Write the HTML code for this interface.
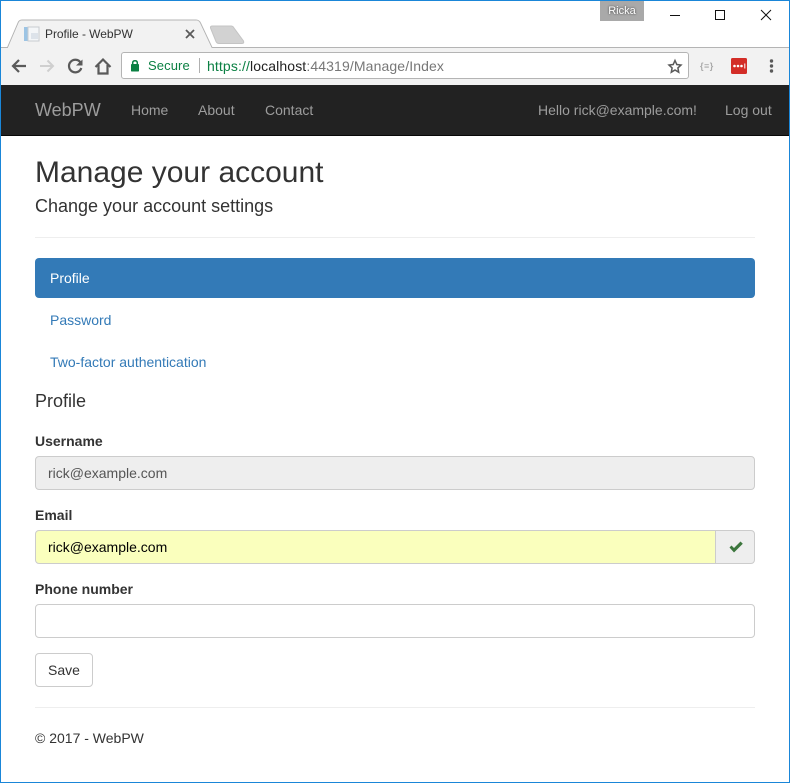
<!DOCTYPE html>
<html><head><meta charset="utf-8"><title>Profile - WebPW</title>
<style>
html,body{margin:0;padding:0;background:#fff}
body{width:790px;height:783px;position:relative;overflow:hidden;font-family:"Liberation Sans",sans-serif;font-size:14px;color:#333}
.a{position:absolute;white-space:nowrap}
.t{line-height:20px}
.n{color:#9d9d9d}
.in{box-sizing:border-box;height:34px;border:1px solid #ccc;border-radius:4px;left:35px;width:720px;padding:0 12px;line-height:32px;color:#555}
.l{font-weight:bold;color:#333}
.lnk{color:#337ab7}
</style></head><body>
<!-- window chrome -->
<div class="a" style="left:0;top:48px;width:790px;height:37px;background:#f2f2f2;"></div>
<svg class="a" style="left:0;top:0" width="790" height="85" viewBox="0 0 790 85">
<path d="M0.5 47.5H7.5L18 23Q19 20 22 20H196Q199 20 200.500 23L212 47.500H789.500" fill="none" stroke="#b4b4b4"/>
<path d="M8 48L18.500 23.500Q19.500 20.500 22 20.500H196Q198.500 20.500 200 23.500L211.500 48Z" fill="#f2f2f2"/>
<path d="M210.500 28Q210 26 212.500 26H231Q233 26 234 28L243.500 41Q244.500 43.500 242 43.500H219Q217 43.500 216 41.500Z" fill="#d2d2d2" stroke="#c4c4c4"/>
<!-- favicon -->
<rect x="24" y="27" width="4" height="14" fill="#9cc4e4"/>
<rect x="28" y="27" width="11" height="14" fill="#f4f6f8" stroke="#c8ccd0" stroke-width="1"/>
<rect x="31" y="33" width="7" height="6" fill="#dde3ea"/>
<!-- tab close -->
<path d="M186 30L194 38M194 30L186 38" stroke="#5a5a5a" stroke-width="1.800" fill="none"/>
<!-- back -->
<path d="M26 66H13.500M19 60L13 66L19 72" stroke="#5a5a5a" stroke-width="2.200" fill="none"/>
<!-- forward -->
<path d="M40 66H53M47.500 60.500L53 66L47.500 71.500" stroke="#cfcfcf" stroke-width="2" fill="none"/>
<!-- reload -->
<path d="M80.500 62.500A6.300 6.300 0 1 0 81.300 68" stroke="#5a5a5a" stroke-width="2.200" fill="none"/>
<path d="M76 65.500H82.500V59.500Z" fill="#5a5a5a"/>
<!-- home -->
<path d="M95.500 67L103 59.500L110.500 67M98.500 65V73.500H107.500V65" stroke="#5a5a5a" stroke-width="2.200" fill="none"/>
<!-- omnibox -->
<rect x="121.500" y="52.500" width="567" height="26" rx="2.500" fill="#fff" stroke="#b4b4b4"/>
<!-- lock -->
<rect x="131" y="64" width="8" height="7.500" rx="0.800" fill="#0b8043"/>
<path d="M132.700 64V62.800Q132.700 60.700 135 60.700Q137.300 60.700 137.300 62.800V64" fill="none" stroke="#0b8043" stroke-width="1.500"/>
<rect x="199" y="58" width="1" height="15" fill="#b0b0b0"/>
<!-- star -->
<path d="M675 60.500L676.800 64.500L681 65L677.900 67.900L678.700 72.200L675 70L671.300 72.200L672.100 67.900L669 65L673.200 64.500Z" fill="none" stroke="#5a5a5a" stroke-width="1.500"/>
<!-- lastpass -->
<rect x="731" y="58" width="16" height="16" rx="1.500" fill="#d32d27"/>
<circle cx="734.500" cy="66" r="1.300" fill="#fff"/><circle cx="738" cy="66" r="1.300" fill="#fff"/><circle cx="741.500" cy="66" r="1.300" fill="#fff"/>
<rect x="744.300" y="63.500" width="1" height="5" fill="#fff"/>
<!-- menu -->
<circle cx="771.500" cy="61" r="1.700" fill="#5a5a5a"/><circle cx="771.500" cy="66" r="1.700" fill="#5a5a5a"/><circle cx="771.500" cy="71" r="1.700" fill="#5a5a5a"/>
<!-- window controls -->
<rect x="670" y="15" width="10" height="1" fill="#111"/>
<rect x="715.500" y="10.500" width="9" height="9" fill="none" stroke="#111"/>
<path d="M761 10L771 20M771 10L761 20" stroke="#111" stroke-width="1" fill="none"/>
</svg>
<div class="a" style="left:600px;top:1px;width:44px;height:20px;background:#a9a9a9;color:#fff;font-size:11px;line-height:20px;text-align:center;text-shadow:0 0 2px #333">Ricka</div>
<div class="a" style="left:45px;top:24px;font-size:12px;line-height:20px;color:#333;letter-spacing:-0.05px">Profile - WebPW</div>
<div class="a" style="left:148px;top:56px;font-size:13px;line-height:20px;color:#0b8043;letter-spacing:0.1px">Secure</div>
<div class="a" style="left:207px;top:56px;font-size:14px;line-height:20px;color:#777;letter-spacing:0.12px"><span style="color:#0b8043">https://</span><span style="color:#222">localhost</span>:44319/Manage/Index</div>
<div class="a" style="left:700px;top:60px;font-size:9px;line-height:12px;color:#aaa;font-weight:bold;letter-spacing:0.5px">{≡}</div>
<!-- navbar -->
<div class="a" style="left:0;top:85px;width:790px;height:51px;box-sizing:border-box;background:#222;border-bottom:1px solid #080808"></div>
<div class="a n" style="left:35px;top:100px;font-size:18px;line-height:20px">WebPW</div>
<div class="a n t" style="left:131px;top:100px">Home</div>
<div class="a n t" style="left:198px;top:100px">About</div>
<div class="a n t" style="left:265px;top:100px">Contact</div>
<div class="a n t" style="left:538px;top:100px">Hello rick@example.com!</div>
<div class="a n t" style="left:725px;top:100px">Log out</div>
<!-- header -->
<div class="a" style="left:35px;top:156px;font-size:30px;line-height:33px;color:#333">Manage your account</div>
<div class="a" style="left:35px;top:196px;font-size:18px;line-height:20px;color:#333">Change your account settings</div>
<div class="a" style="left:35px;top:237px;width:720px;height:1px;background:#eee"></div>
<!-- pills -->
<div class="a" style="left:35px;top:258px;width:720px;height:40px;background:#337ab7;border-radius:4px"></div>
<div class="a t" style="left:50px;top:268px;color:#fff">Profile</div>
<div class="a t lnk" style="left:50px;top:310px">Password</div>
<div class="a t lnk" style="left:50px;top:352px">Two-factor authentication</div>
<div class="a" style="left:35px;top:391px;font-size:18px;line-height:20px;color:#333">Profile</div>
<!-- form -->
<div class="a t l" style="left:35px;top:431px">Username</div>
<div class="a in" style="top:456px;background:#eee">rick@example.com</div>
<div class="a t l" style="left:35px;top:505px">Email</div>
<div class="a in" style="top:530px;width:681px;background:#faffbd;color:#000;border-radius:4px 0 0 4px">rick@example.com</div>
<div class="a" style="left:715px;top:530px;width:40px;height:34px;box-sizing:border-box;background:#eee;border:1px solid #ccc;border-radius:0 4px 4px 0"></div>
<svg class="a" style="left:728px;top:540px" width="16" height="14" viewBox="0 0 16 14"><path d="M1.500 7.500L3.500 5.500L6 8L12.500 1.500L14.800 3.800L6 12.500Z" fill="#3c763d"/></svg>
<div class="a t l" style="left:35px;top:579px">Phone number</div>
<div class="a in" style="top:604px;background:#fff"></div>
<div class="a" style="left:35px;top:653px;width:58px;height:34px;box-sizing:border-box;border:1px solid #ccc;border-radius:4px;background:#fff;text-align:center;line-height:32px;color:#333">Save</div>
<div class="a" style="left:35px;top:707px;width:720px;height:1px;background:#eee"></div>
<div class="a t" style="left:35px;top:728px">© 2017 - WebPW</div>
<!-- window border -->
<div class="a" style="left:0;top:0;width:790px;height:783px;box-sizing:border-box;border:1px solid #1a86d8;pointer-events:none"></div>
</body></html>
